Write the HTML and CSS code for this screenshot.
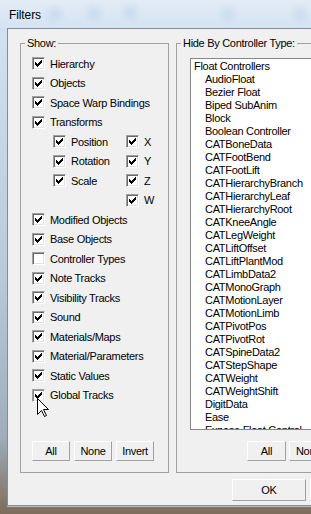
FILE: index.html
```html
<!DOCTYPE html>
<html lang="en">
<head>
    <meta charset="UTF-8">
    <meta name="viewport" content="width=device-width, initial-scale=1.0">
    <title>Filters</title>
    <link rel="stylesheet" href="styles.css">
</head>
<body>
    <svg class="defs" width="0" height="0">
        <symbol id="tick" viewBox="0 0 7 7">
            <path d="M6 0h1v1h-1z M5 1h2v1h-2z M0 2h1v1h-1z M4 2h3v1h-3z M0 3h2v1h-2z M3 3h3v1h-3z M0 4h5v1h-5z M1 5h3v1h-3z M2 6h1v1h-1z"/>
        </symbol>
    </svg>

    <div class="window">
        <div class="titlebar">Filters</div>
        <div class="frame">
            <div class="client">
                <div class="groups">
                    <!-- Show: checkboxes -->
                    <fieldset class="group show">
                        <legend>Show:</legend>
                        <div class="options">
                            <div class="opt"><span class="box"><svg class="tick"><use href="#tick"/></svg></span>Hierarchy</div>
                            <div class="opt"><span class="box"><svg class="tick"><use href="#tick"/></svg></span>Objects</div>
                            <div class="opt"><span class="box"><svg class="tick"><use href="#tick"/></svg></span>Space Warp Bindings</div>
                            <div class="opt"><span class="box"><svg class="tick"><use href="#tick"/></svg></span>Transforms</div>
                            <div class="sub">
                                <div class="opt"><span class="box"><svg class="tick"><use href="#tick"/></svg></span>Position</div>
                                <div class="opt"><span class="box"><svg class="tick"><use href="#tick"/></svg></span>X</div>
                                <div class="opt"><span class="box"><svg class="tick"><use href="#tick"/></svg></span>Rotation</div>
                                <div class="opt"><span class="box"><svg class="tick"><use href="#tick"/></svg></span>Y</div>
                                <div class="opt"><span class="box"><svg class="tick"><use href="#tick"/></svg></span>Scale</div>
                                <div class="opt"><span class="box"><svg class="tick"><use href="#tick"/></svg></span>Z</div>
                                <div class="opt"></div>
                                <div class="opt"><span class="box"><svg class="tick"><use href="#tick"/></svg></span>W</div>
                            </div>
                            <div class="opt"><span class="box"><svg class="tick"><use href="#tick"/></svg></span>Modified Objects</div>
                            <div class="opt"><span class="box"><svg class="tick"><use href="#tick"/></svg></span>Base Objects</div>
                            <div class="opt"><span class="box"></span>Controller Types</div>
                            <div class="opt"><span class="box"><svg class="tick"><use href="#tick"/></svg></span>Note Tracks</div>
                            <div class="opt"><span class="box"><svg class="tick"><use href="#tick"/></svg></span>Visibility Tracks</div>
                            <div class="opt"><span class="box"><svg class="tick"><use href="#tick"/></svg></span>Sound</div>
                            <div class="opt"><span class="box"><svg class="tick"><use href="#tick"/></svg></span>Materials/Maps</div>
                            <div class="opt"><span class="box"><svg class="tick"><use href="#tick"/></svg></span>Material/Parameters</div>
                            <div class="opt"><span class="box"><svg class="tick"><use href="#tick"/></svg></span>Static Values</div>
                            <div class="opt"><span class="box hover"><svg class="tick"><use href="#tick"/></svg></span>Global Tracks</div>
                        </div>
                        <div class="btns">
                            <button class="btn">All</button>
                            <button class="btn">None</button>
                            <button class="btn">Invert</button>
                        </div>
                    </fieldset>

                    <!-- Hide By Controller Type: list -->
                    <fieldset class="group hide">
                        <legend>Hide By Controller Type:</legend>
                        <ul class="listbox">
                            <li>Float Controllers</li>
                            <li class="child">AudioFloat</li>
                            <li class="child">Bezier Float</li>
                            <li class="child">Biped SubAnim</li>
                            <li class="child">Block</li>
                            <li class="child">Boolean Controller</li>
                            <li class="child">CATBoneData</li>
                            <li class="child">CATFootBend</li>
                            <li class="child">CATFootLift</li>
                            <li class="child">CATHierarchyBranch</li>
                            <li class="child">CATHierarchyLeaf</li>
                            <li class="child">CATHierarchyRoot</li>
                            <li class="child">CATKneeAngle</li>
                            <li class="child">CATLegWeight</li>
                            <li class="child">CATLiftOffset</li>
                            <li class="child">CATLiftPlantMod</li>
                            <li class="child">CATLimbData2</li>
                            <li class="child">CATMonoGraph</li>
                            <li class="child">CATMotionLayer</li>
                            <li class="child">CATMotionLimb</li>
                            <li class="child">CATPivotPos</li>
                            <li class="child">CATPivotRot</li>
                            <li class="child">CATSpineData2</li>
                            <li class="child">CATStepShape</li>
                            <li class="child">CATWeight</li>
                            <li class="child">CATWeightShift</li>
                            <li class="child">DigitData</li>
                            <li class="child">Ease</li>
                            <li class="child">Expose Float Control</li>
                        </ul>
                        <div class="btns right">
                            <button class="btn wide">All</button>
                            <button class="btn wide">None</button>
                            <button class="btn wide">Invert</button>
                        </div>
                    </fieldset>
                </div>

                <div class="footer">
                    <button class="btn dlg">OK</button>
                    <button class="btn dlg">Cancel</button>
                </div>
            </div>
        </div>
    </div>

    <!-- mouse pointer over Global Tracks -->
    <svg class="cursor" width="13" height="20" viewBox="0 0 13 20">
        <path d="M0.5 0.5 L0.5 16.5 L4.5 12.5 L7.5 18.5 L9.5 17.5 L6.5 11.5 L11.5 11.5 Z" fill="#fff" stroke="#000" stroke-width="1"/>
    </svg>
</body>
</html>
```

FILE: styles.css
```css
/* Page */
body {
    margin: 0;
    width: 311px;
    height: 514px;
    overflow: hidden;
    font-family: 'Liberation Sans', Arial, sans-serif;
    font-size: 11px;
    color: #000;
}

.defs {
    position: absolute;
}

/* Window frame */
.window {
    width: 402px;
    height: 514px;
    display: flex;
    flex-direction: column;
    background: linear-gradient(to bottom, #dbe7f3 0, #d2e1f1 28px, #b8c8d9 55%, #9fadbb 85%, #7d6c5a 100%);
}

.titlebar {
    height: 28px;
    padding: 1px 0 0 9px;
    box-sizing: border-box;
    display: flex;
    align-items: center;
    font-size: 12px;
    letter-spacing: -0.1px;
    background:
        radial-gradient(circle at 55px 14px, rgba(120, 160, 210, 0.18), transparent 12px),
        radial-gradient(circle at 94px 13px, rgba(120, 160, 210, 0.18), transparent 12px),
        radial-gradient(circle at 130px 12px, rgba(120, 160, 210, 0.18), transparent 12px),
        radial-gradient(circle at 228px 14px, rgba(120, 160, 210, 0.15), transparent 12px),
        radial-gradient(circle at 300px 14px, rgba(120, 160, 210, 0.15), transparent 12px),
        linear-gradient(to bottom, #e3ecf6, #d4e3f2);
}

.frame {
    flex: 1;
    display: flex;
    padding: 0 7px 8px 7px;
}

.client {
    flex: 1;
    display: flex;
    flex-direction: column;
    background: #f0f0f0;
    border: 1px solid #7f8d9c;
    box-shadow: 0 1px 0 rgba(255, 255, 255, 0.5);
    padding: 8px 12px 4px 12px;
}

/* Group boxes */
.groups {
    display: flex;
    gap: 7px;
    height: 436px;
}

.group {
    margin: 0;
    min-width: 0;
    box-sizing: border-box;
    border: 1px solid #a0a0a0;
    display: flex;
    flex-direction: column;
}

.group legend {
    padding: 0 2px;
    line-height: 13px;
    letter-spacing: -0.3px;
}

.show {
    width: 149px;
    flex: none;
    padding: 4px 0 11px 11px;
}

.show legend {
    margin-left: -7px;
}

.hide {
    flex: 1;
    padding: 8px 13px 11px 13px;
}

.hide legend {
    margin-left: -9px;
}

/* Checkbox rows */
.opt {
    height: 19.5px;
    display: flex;
    align-items: center;
    gap: 5px;
    letter-spacing: -0.3px;
    white-space: nowrap;
}

.sub {
    display: grid;
    grid-template-columns: 73px auto;
    padding-left: 21px;
}

.box {
    width: 13px;
    height: 13px;
    flex: none;
    box-sizing: border-box;
    background: #fff;
    border: 1px solid;
    border-color: #a0a0a0 #fff #fff #a0a0a0;
    box-shadow: inset 1px 1px 0 #696969, inset -1px -1px 0 #e3e3e3;
    display: flex;
    align-items: center;
    justify-content: center;
}

.box.hover {
    box-shadow: inset 1px 1px 0 #8a8a8a, inset -1px -1px 0 #e3e3e3;
}

.tick {
    width: 7px;
    height: 7px;
    fill: #000;
    shape-rendering: crispEdges;
}

/* List box */
.listbox {
    list-style: none;
    margin: 0;
    padding: 1px 0 0 3px;
    height: 372px;
    box-sizing: border-box;
    overflow: hidden;
    background: #fff;
    border: 1px solid #828790;
}

.listbox li {
    height: 13px;
    line-height: 13px;
    letter-spacing: -0.3px;
    white-space: nowrap;
}

.listbox li.child {
    padding-left: 11px;
}

/* Buttons */
.btns {
    margin-top: auto;
    display: flex;
    gap: 4px;
}

.btns.right {
    padding-left: 57px;
    gap: 3px;
}

.btn {
    width: 38px;
    height: 20px;
    padding: 0;
    font-family: inherit;
    font-size: 11px;
    letter-spacing: -0.3px;
    color: #000;
    background: #f0f0f0;
    border: 1px solid;
    border-color: #fff #a0a0a0 #a0a0a0 #fff;
}

.btn.wide {
    width: 39px;
}

.footer {
    margin-top: 6px;
    display: flex;
    justify-content: flex-end;
    gap: 4px;
}

.btn.dlg {
    width: 74px;
    height: 22px;
}

/* Mouse pointer */
.cursor {
    position: absolute;
    left: 37px;
    top: 398px;
}
```
